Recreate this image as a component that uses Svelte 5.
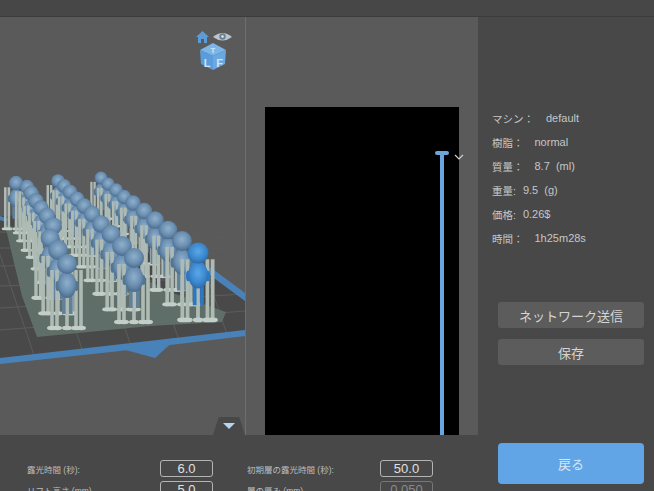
<script lang="ts">
	// head centres of the printed figures, back to front, per row
	const rowA = [[16,183,6.5],[27,187,6.5],[31,193,6.8],[36,201,7],[41,208,7],[47,216,7.5],[53,226,8],[50,238,8.5],[58,250,9],[67,264,10]];
	const rowB = [[58,181,6.2],[64,186,6.4],[70,192,6.6],[77,199,6.8],[84,206,7],[92,214,7.5],[101,224,8],[111,234,8.5],[122,246,9],[134,258,10]];
	const rowC = [[101,178,5.8],[108,184,6],[116,190,6.2],[124,197,6.5],[133,203,7],[144,211,7.5],[155,220,8],[168,230,8.5],[182,241,9],[198,253,9.5]];
	const figures = [...rowC, ...rowB, ...rowA]
		.map(([x, y, r]) => ({ x, y, r: r < 10 ? r * 1.1 : r, selected: x === 198 }))
		.sort((a, b) => a.y - b.y);

	const info = [
		{ label: 'マシン：', value: 'default', gap: 12 },
		{ label: '樹脂：', value: 'normal', gap: 11 },
		{ label: '質量：', value: '8.7  (ml)', gap: 11 },
		{ label: '重量:', value: '9.5  (g)', gap: 7 },
		{ label: '価格:', value: '0.26$', gap: 7 },
		{ label: '時間：', value: '1h25m28s', gap: 11 }
	];

	const params = [
		{ label: '露光時間 (秒):', value: '6.0' },
		{ label: '初期層の露光時間 (秒):', value: '50.0' },
		{ label: 'リフト高さ (mm)', value: '5.0' },
		{ label: '層の厚み (mm)', value: '0.050', dim: true }
	];

	const gridV = [-60, -10, 40, 90, 140, 190, 240];
	const gridH = [232, 248, 266, 286, 308, 330];
</script>

<div class="app">
	<header class="top"></header>
	<div class="body">
		<div class="work">
			<div class="panes">
				<section class="viewport">
					<svg class="scene" viewBox="0 0 245 419" width="245" height="419">
						<defs>
							<radialGradient id="ball" cx="0.5" cy="0.42" r="0.6">
								<stop offset="0" stop-color="#8fb0cc" />
								<stop offset="0.6" stop-color="#6a8eb0" />
								<stop offset="1" stop-color="#47688a" />
							</radialGradient>
							<radialGradient id="ballSel" cx="0.5" cy="0.42" r="0.6">
								<stop offset="0" stop-color="#5aa8e8" />
								<stop offset="0.65" stop-color="#3a86cc" />
								<stop offset="1" stop-color="#2a68a6" />
							</radialGradient>
							<filter id="soft"><feGaussianBlur stdDeviation="0.6" /></filter>
						</defs>
						<g filter="url(#soft)">
							<polygon points="0,216 60,214 212,270 245,297 245,332 0,360" fill="#4a4a4a" />
							{#each gridH as y, i}
								<line x1="0" y1={y} x2="245" y2={y + 6 - i * 5} stroke="#5c5c5c" />
							{/each}
							{#each gridV as x}
								<line x1={x} y1="225" x2={x + 45} y2="358" stroke="#5c5c5c" />
							{/each}
							<polygon points="5,225 70,240 170,292 226,312 222,322 150,326 37,337 22,296" fill="#5f6e67" />
							<polygon points="0,358 245,330 245,336 120,351 0,364" fill="#4a82b8" />
							<polygon points="113,347 177,338 155,358 133,352" fill="#4a82b8" />
							<polygon points="210,267 245,293 245,301 207,273" fill="#4a82b8" />
							<polygon points="0,216 8,219 6,222 0,220" fill="#4a82b8" />

							{#each figures as f}
								{@const s = f.r / 10}
								{#each [-15, -10, 0, 9, 14] as dx}
									<rect x={f.x + dx * s - 1.8 * s} y={f.y + 6 * s} width={3.6 * s} height={58 * s} fill="#aebbb5" />
									<ellipse cx={f.x + dx * s} cy={f.y + 64 * s} rx={5 * s} ry={2.2 * s} fill="#c3cec8" />
								{/each}
								<rect x={f.x - 5 * s} y={f.y + 30 * s} width={3.6 * s} height={20 * s} fill={f.selected ? '#2c78c2' : '#62809a'} />
								<rect x={f.x + 2 * s} y={f.y + 30 * s} width={3.6 * s} height={20 * s} fill={f.selected ? '#2c78c2' : '#62809a'} />
								<ellipse cx={f.x - 9.5 * s} cy={f.y + 22 * s} rx={2 * s} ry={5 * s} fill={f.selected ? '#2c78c2' : '#55758f'} />
								<ellipse cx={f.x + 9.5 * s} cy={f.y + 22 * s} rx={2 * s} ry={5 * s} fill={f.selected ? '#2c78c2' : '#55758f'} />
								<ellipse cx={f.x} cy={f.y + 21 * s} rx={9.5 * s} ry={13 * s} fill={f.selected ? 'url(#ballSel)' : 'url(#ball)'} />
								<circle cx={f.x} cy={f.y} r={f.r} fill={f.selected ? 'url(#ballSel)' : 'url(#ball)'} />
							{/each}
						</g>
					</svg>

					<svg class="gizmo" viewBox="0 0 40 44" width="40" height="44">
						<path d="M1 8 L7.5 2 L14 8 H12 V14 H9 V10 H6 V14 H3 V8 Z" fill="#5b9bd8" />
						<path d="M18 8 Q27.5 0 37 8 Q27.5 15 18 8 Z" fill="#b9c6d2" />
						<circle cx="27.5" cy="7.5" r="3.2" fill="#6f7f8e" />
						<circle cx="27.5" cy="7.5" r="1.3" fill="#dfe6ec" />
						<path d="M5 21 L18 14 L31 21 L18 27 Z" fill="#7db5e8" />
						<path d="M5 21 L18 27 V41 L6 35 Z" fill="#5b9cdc" />
						<path d="M31 21 L18 27 V41 L30 35 Z" fill="#6aa8e2" />
						<text x="18" y="24" class="face top-face">T</text>
						<text x="12" y="38" class="face">L</text>
						<text x="24.5" y="38" class="face">F</text>
					</svg>

					<button class="tab" aria-label="折りたたむ"><span class="arrow"></span></button>
				</section>

				<section class="slice">
					<div class="preview">
						<div class="slider"></div>
						<svg class="chev" viewBox="0 0 10 6" width="10" height="6">
							<path d="M1 1 L5 5 L9 1" fill="none" stroke="#d0d0d0" stroke-width="1.2" />
						</svg>
					</div>
				</section>
			</div>

			<footer class="params">
				{#each params as p}
					<div class="param">
						<span class="name">{p.label}</span>
						<span class="field" class:dim={p.dim}>{p.value}</span>
					</div>
				{/each}
			</footer>
		</div>

		<aside class="side">
			<dl class="info">
				{#each info as row}
					<div class="row">
						<dt style="margin-right: {row.gap}px">{row.label}</dt>
						<dd>{row.value}</dd>
					</div>
				{/each}
			</dl>
			<div class="actions">
				<button class="btn">ネットワーク送信</button>
				<button class="btn">保存</button>
			</div>
			<button class="btn primary">戻る</button>
		</aside>
	</div>
</div>

<style>
	:global(body) {
		margin: 0;
		background: #484848;
	}
	.app {
		width: 654px;
		height: 491px;
		display: flex;
		flex-direction: column;
		overflow: hidden;
		font-family: 'Liberation Sans', 'Noto Sans CJK JP', sans-serif;
		color: #cfcfcf;
	}
	.top {
		height: 16px;
		flex: none;
		background: #474747;
		border-bottom: 1px solid #3c3c3c;
	}
	.body {
		flex: 1;
		display: grid;
		grid-template-columns: 478px 176px;
		min-height: 0;
	}
	.work {
		display: flex;
		flex-direction: column;
		min-height: 0;
	}
	.panes {
		flex: 1;
		display: grid;
		grid-template-columns: 245px 233px;
		min-height: 0;
	}
	.viewport {
		position: relative;
		background: #5a5a5a;
	}
	.scene {
		position: absolute;
		left: 0;
		top: -17px;
	}
	.gizmo {
		position: absolute;
		left: 195px;
		top: 12px;
	}
	.face {
		font-size: 11px;
		font-weight: 700;
		fill: #cfe4f7;
		text-anchor: middle;
	}
	.top-face {
		font-size: 8px;
	}
	.tab {
		position: absolute;
		right: 0;
		bottom: 0;
		width: 32px;
		height: 18px;
		padding: 0;
		border: 0;
		background: #484848;
		clip-path: polygon(18% 0, 82% 0, 100% 100%, 0 100%);
		display: flex;
		justify-content: center;
		padding-top: 6px;
	}
	.arrow {
		width: 0;
		height: 0;
		border-left: 6px solid transparent;
		border-right: 6px solid transparent;
		border-top: 6px solid #b5d6f2;
	}
	.slice {
		background: #5a5a5a;
		border-left: 1px solid #6e6e6e;
		padding: 90px 19px 0;
		box-sizing: border-box;
		display: flex;
	}
	.preview {
		position: relative;
		flex: 1;
		background: #000;
	}
	.slider {
		position: absolute;
		left: 175px;
		top: 46px;
		bottom: 0;
		width: 4px;
		background: #6ba5dd;
	}
	.slider::before {
		content: '';
		position: absolute;
		left: -5px;
		top: -2px;
		width: 14px;
		height: 4px;
		border-radius: 2px;
		background: #6ba5dd;
	}
	.chev {
		position: absolute;
		left: 189px;
		top: 47px;
	}
	.params {
		height: 56px;
		flex: none;
		background: #484848;
		box-sizing: border-box;
		padding: 25px 45px 0 27px;
		display: grid;
		grid-template-columns: 186px 186px;
		column-gap: 34px;
		row-gap: 4px;
		align-content: start;
	}
	.param {
		display: flex;
		justify-content: space-between;
		align-items: center;
		height: 17px;
	}
	.name {
		font-size: 8.5px;
		color: #bdbdbd;
	}
	.field {
		box-sizing: border-box;
		width: 53px;
		height: 17px;
		border: 1px solid #b4b4b4;
		border-radius: 3px;
		font-size: 13px;
		line-height: 15px;
		text-align: center;
		color: #e0e0e0;
	}
	.field.dim {
		border-color: #777;
		color: #8a8a8a;
	}
	.side {
		background: #484848;
		display: flex;
		flex-direction: column;
		padding: 89px 10px 0 14px;
	}
	.info {
		margin: 0;
		font-size: 10.5px;
		color: #c6c6c6;
	}
	.row {
		display: flex;
		height: 24px;
		align-items: center;
		white-space: pre;
	}
	dd {
		margin: 0;
		font-size: 11px;
	}
	.actions {
		display: flex;
		flex-direction: column;
		gap: 11px;
		margin: 52px 0 78px 6px;
	}
	.btn {
		height: 26px;
		border: 0;
		border-radius: 3px;
		background: #5c5c5c;
		color: #d4d4d4;
		font: inherit;
		font-size: 13px;
		padding: 0;
	}
	.btn.primary {
		height: 41px;
		margin-left: 6px;
		border-radius: 4px;
		background: #62a5e6;
		color: #d8e6f2;
	}
</style>
